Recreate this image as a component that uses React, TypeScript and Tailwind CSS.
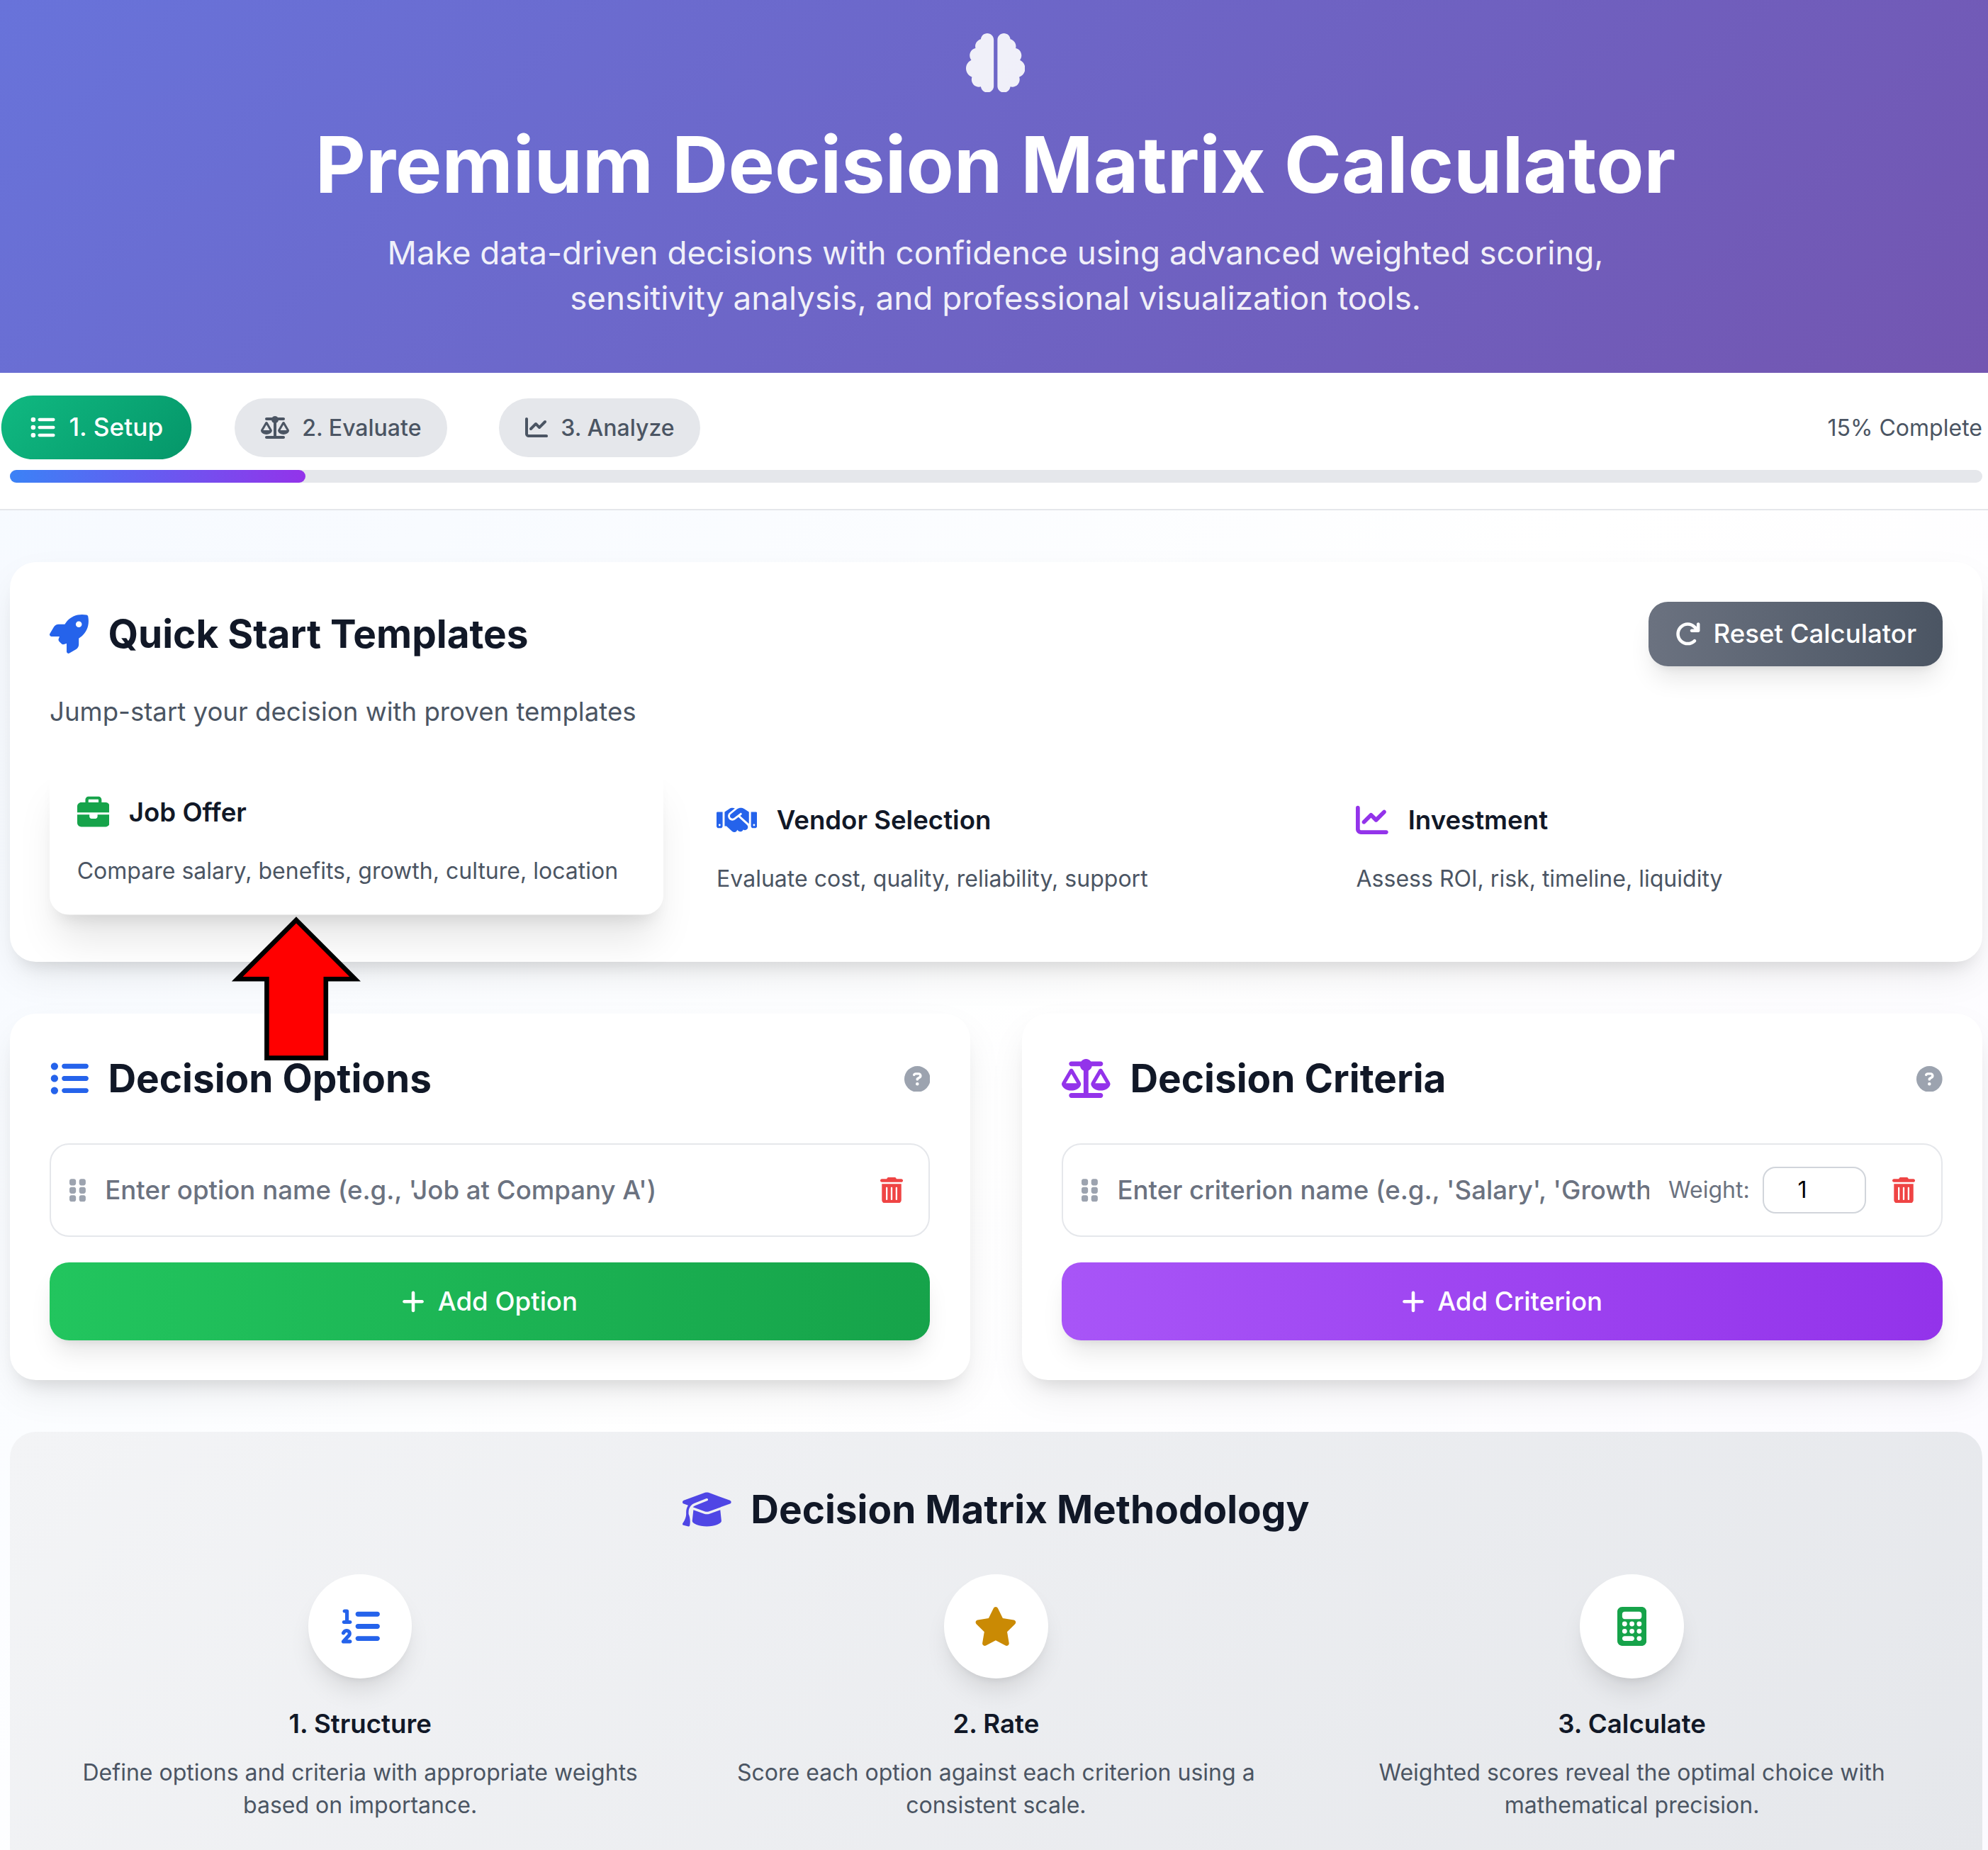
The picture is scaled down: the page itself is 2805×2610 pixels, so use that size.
import type { ReactNode } from "react";
import {
  FaArrowRotateRight,
  FaBrain,
  FaBriefcase,
  FaCalculator,
  FaChartLine,
  FaCircleQuestion,
  FaGraduationCap,
  FaGripVertical,
  FaHandshake,
  FaListOl,
  FaListUl,
  FaPlus,
  FaRocket,
  FaScaleBalanced,
  FaStar,
  FaTrashCan,
} from "react-icons/fa6";

const CARD =
  "rounded-2xl bg-white px-[24.6px] pt-[24.2px] pb-[24.3px] shadow-[0_10px_25px_-5px_rgba(0,0,0,0.1),0_8px_10px_-6px_rgba(0,0,0,0.1)]";

function Header() {
  return (
    <header className="flex h-[229.7px] flex-col items-center bg-[linear-gradient(135deg,#6873da_0%,#7356b1_100%)] pt-[20.5px] pl-[5.3px] pr-[3.5px] text-white">
      <FaBrain className="mb-[20.9px] h-[36.5px] w-[36.5px] shrink-0 opacity-90" />
      <h1 className="mb-[16.2px] text-5xl leading-none font-bold">Premium Decision Matrix Calculator</h1>
      <p className="max-w-3xl text-center text-xl leading-7 opacity-90">
        Make data-driven decisions with confidence using advanced weighted scoring, sensitivity analysis, and
        professional visualization tools.
      </p>
    </header>
  );
}

function StepPill({ icon, label, active = false }: { icon: ReactNode; label: string; active?: boolean }) {
  return (
    <div
      className={
        active
          ? "flex scale-110 items-center gap-2 rounded-full bg-[linear-gradient(135deg,#10b981,#059669)] px-4 py-2 text-sm font-medium text-white"
          : "flex items-center gap-2 rounded-full bg-[#e5e7eb] px-4 py-2 text-sm font-medium text-[#4b5563]"
      }
    >
      {icon}
      <span>{label}</span>
    </div>
  );
}

function ProgressNav() {
  return (
    <nav className="border-b border-[#e5e7eb] bg-white py-4 pl-[6px] pr-[3.5px]">
      <div className="flex items-center justify-between">
        <div className="flex items-center gap-8">
          <StepPill active icon={<FaListUl className="h-3.5 w-3.5" />} label="1. Setup" />
          <StepPill icon={<FaScaleBalanced className="h-3.5 w-[17.5px]" />} label="2. Evaluate" />
          <StepPill icon={<FaChartLine className="h-3.5 w-3.5" />} label="3. Analyze" />
        </div>
        <span className="text-sm text-[#4b5563]">15% Complete</span>
      </div>
      <div className="mt-2 h-2 rounded-full bg-[#e5e7eb]">
        <div className="h-2 w-[15%] rounded-full bg-[linear-gradient(90deg,#3b82f6,#9333ea)]" />
      </div>
    </nav>
  );
}

function Template({
  icon,
  title,
  text,
  hovered = false,
}: {
  icon: ReactNode;
  title: string;
  text: string;
  hovered?: boolean;
}) {
  return (
    <div
      className={
        hovered
          ? "-translate-y-[4.6px] rounded-xl border border-white bg-white p-4 shadow-[0_20px_25px_-5px_rgba(0,0,0,0.1),0_8px_10px_-6px_rgba(0,0,0,0.1)]"
          : "rounded-xl border border-transparent p-4"
      }
    >
      <div className="mb-3 flex h-7 items-center gap-3">
        {icon}
        <h3 className="text-base font-semibold text-[#111827]">{title}</h3>
      </div>
      <p className="text-sm text-[#4b5563]">{text}</p>
    </div>
  );
}

function QuickStart() {
  return (
    <section className={CARD}>
      <div className="mb-4 flex items-center justify-between">
        <h2 className="flex items-center gap-3 text-2xl font-bold text-[#111827]">
          <FaRocket className="h-6 w-6 text-[#2563eb]" />
          Quick Start Templates
        </h2>
        <button className="flex items-center gap-2 rounded-xl bg-[linear-gradient(90deg,#6b7280,#4b5563)] px-4 py-2 text-base font-medium text-white shadow-[0_10px_15px_-3px_rgba(0,0,0,0.1),0_4px_6px_-4px_rgba(0,0,0,0.1)]">
          <FaArrowRotateRight className="h-4 w-4" />
          Reset Calculator
        </button>
      </div>
      <p className="mb-6 text-base text-[#4b5563]">Jump-start your decision with proven templates</p>
      <div className="grid grid-cols-3 gap-4">
        <Template
          hovered
          icon={<FaBriefcase className="h-5 w-5 text-[#16a34a]" />}
          title="Job Offer"
          text="Compare salary, benefits, growth, culture, location"
        />
        <Template
          icon={<FaHandshake className="h-5 w-[25px] text-[#2563eb]" />}
          title="Vendor Selection"
          text="Evaluate cost, quality, reliability, support"
        />
        <Template
          icon={<FaChartLine className="h-5 w-5 text-[#9333ea]" />}
          title="Investment"
          text="Assess ROI, risk, timeline, liquidity"
        />
      </div>
    </section>
  );
}

function ListCard({
  icon,
  title,
  placeholder,
  extra,
  button,
  buttonClass,
}: {
  icon: ReactNode;
  title: string;
  placeholder: string;
  extra?: ReactNode;
  button: string;
  buttonClass: string;
}) {
  return (
    <section className={CARD}>
      <div className="mb-6 flex items-center justify-between">
        <h2 className="flex items-center gap-3 text-2xl font-bold text-[#111827]">
          {icon}
          {title}
        </h2>
        <FaCircleQuestion className="h-4 w-4 text-[#9ca3af]" />
      </div>
      <div className="mb-4 flex h-[57.4px] items-center gap-3 rounded-xl border border-[#e5e7eb] pr-3 pl-[11.3px]">
        <FaGripVertical className="h-4 w-2.5 shrink-0 text-[#9ca3af]" />
        <input
          type="text"
          placeholder={placeholder}
          className="h-6 min-w-0 flex-1 bg-transparent text-base font-medium text-[#111827] placeholder:text-[#6b7280]"
        />
        {extra}
        <button className="p-1 text-[#ef4444]">
          <FaTrashCan className="h-4 w-3.5" />
        </button>
      </div>
      <button className={buttonClass}>
        <FaPlus className="h-4 w-3.5" />
        {button}
      </button>
    </section>
  );
}

function WeightField() {
  return (
    <div className="flex items-center gap-2">
      <span className="text-sm text-[#6b7280]">Weight:</span>
      <div className="flex h-[29px] w-16 items-center justify-center rounded-lg border border-[#d1d5db] pr-[15px] text-sm text-black">
        1
      </div>
    </div>
  );
}

function Step({ icon, title, text }: { icon: ReactNode; title: string; text: string }) {
  return (
    <div className="flex flex-col items-center text-center">
      <div className="mb-4 flex h-16 w-16 items-center justify-center rounded-full bg-white shadow-[0_10px_15px_-3px_rgba(0,0,0,0.1),0_4px_6px_-4px_rgba(0,0,0,0.1)]">
        {icon}
      </div>
      <h3 className="mb-2 text-base font-semibold text-[#111827]">{title}</h3>
      <p className="text-sm text-[#4b5563]">{text}</p>
    </div>
  );
}

function Methodology() {
  return (
    <section className="rounded-2xl bg-[linear-gradient(135deg,#f3f4f6,#e5e7eb)] p-8">
      <h2 className="mb-6 flex items-center justify-center gap-3 text-2xl font-bold text-[#111827]">
        <FaGraduationCap className="h-6 w-[30px] text-[#4f46e5]" />
        Decision Matrix Methodology
      </h2>
      <div className="grid grid-cols-3 gap-6">
        <Step
          icon={<FaListOl className="h-6 w-6 text-[#2563eb]" />}
          title="1. Structure"
          text="Define options and criteria with appropriate weights based on importance."
        />
        <Step
          icon={<FaStar className="h-6 w-[27px] text-[#ca8a04]" />}
          title="2. Rate"
          text="Score each option against each criterion using a consistent scale."
        />
        <Step
          icon={<FaCalculator className="h-6 w-[18px] text-[#16a34a]" />}
          title="3. Calculate"
          text="Weighted scores reveal the optimal choice with mathematical precision."
        />
      </div>
    </section>
  );
}

/* Annotation arrow pointing up at the hovered template. */
function Arrow() {
  return (
    <svg className="absolute top-[1290px] left-[320px]" width="196" height="210" viewBox="320 1290 196 210">
      <path
        d="M418 1298L501 1381.2H459.8V1492.6H376.4V1381.2H334.8Z"
        fill="#ff0000"
        stroke="#000000"
        strokeWidth="6.6"
        strokeMiterlimit="10"
      />
    </svg>
  );
}

export default function App() {
  return (
    <div className="relative h-[2610px] w-[2805px] overflow-hidden">
      <div className="h-full bg-[linear-gradient(135deg,#f5f9ff_0%,#f8fbff_25%,#ffffff_55%,#fbfaff_100%)] font-['Inter',sans-serif] [zoom:2.2887]">
        <Header />
        <ProgressNav />
        <main className="flex flex-col gap-8 pt-8 pl-[6px] pr-[3.5px]">
          <QuickStart />
          <div className="grid grid-cols-2 gap-8">
            <ListCard
              icon={<FaListUl className="h-6 w-6 text-[#2563eb]" />}
              title="Decision Options"
              placeholder="Enter option name (e.g., 'Job at Company A')"
              button="Add Option"
              buttonClass="flex w-full items-center justify-center gap-2 rounded-xl bg-[linear-gradient(90deg,#22c55e,#16a34a)] py-3 text-base font-medium text-white shadow-[0_10px_15px_-3px_rgba(0,0,0,0.1),0_4px_6px_-4px_rgba(0,0,0,0.1)]"
            />
            <ListCard
              icon={<FaScaleBalanced className="h-6 w-[30px] text-[#9333ea]" />}
              title="Decision Criteria"
              placeholder="Enter criterion name (e.g., 'Salary', 'Growth Potential')"
              extra={<WeightField />}
              button="Add Criterion"
              buttonClass="flex w-full items-center justify-center gap-2 rounded-xl bg-[linear-gradient(90deg,#a855f7,#9333ea)] py-3 text-base font-medium text-white shadow-[0_10px_15px_-3px_rgba(0,0,0,0.1),0_4px_6px_-4px_rgba(0,0,0,0.1)]"
            />
          </div>
          <Methodology />
        </main>
      </div>
      <Arrow />
    </div>
  );
}
